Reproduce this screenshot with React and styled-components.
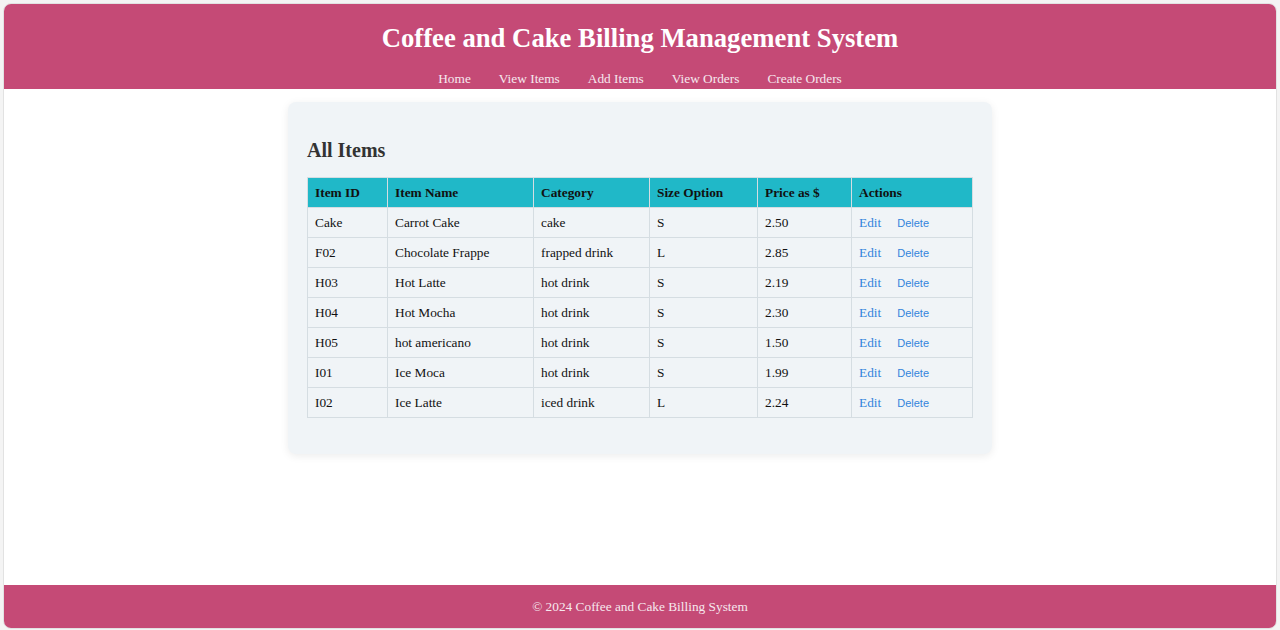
import React from "react";
import styled, { createGlobalStyle } from "styled-components";

const Global = createGlobalStyle`
  html, body { margin: 0; padding: 0; background: #f4f4f4; }
  body { font-family: "Liberation Serif", "Times New Roman", serif; }
`;

const Frame = styled.div`
  margin: 3px 3px 0 3px;
  height: 626px;
  background: #ffffff;
  border-radius: 8px;
  border: 1px solid #e2e2e2;
  box-sizing: border-box;
  overflow: hidden;
  display: flex;
  flex-direction: column;
`;

const Header = styled.header`
  background: #c54a76;
  color: #ffffff;
  height: 85px;
  display: flex;
  flex-direction: column;
  align-items: center;
  flex-shrink: 0;
`;

const Title = styled.h1`
  margin: 18px 0 0;
  font-size: 26.7px;
  line-height: 32px;
  font-weight: bold;
`;

const Nav = styled.nav`
  display: flex;
  gap: 28px;
  margin-top: 17px;
`;

const NavLink = styled.a`
  color: #f6e8ee;
  font-size: 13.33px;
  line-height: 16px;
  text-decoration: none;
`;

const Main = styled.main`
  flex: 1;
  display: flex;
  justify-content: center;
  align-items: flex-start;
  padding-top: 13px;
`;

const Card = styled.section`
  width: 704px;
  box-sizing: border-box;
  background: #f0f4f7;
  border-radius: 8px;
  box-shadow: 0 2px 8px rgba(0, 0, 0, 0.08);
  padding: 35px 19px 36px;
`;

const Heading = styled.h2`
  margin: 0 0 15px;
  padding-top: 1px;
  font-size: 20px;
  line-height: 24px;
  font-weight: bold;
  color: #333333;
`;

const Table = styled.table`
  width: 100%;
  border-collapse: collapse;
  font-size: 13.33px;
  color: #111;
  border: 1px solid #d5dde2;
`;

const Th = styled.th`
  background: #20b8c8;
  color: #111;
  text-align: left;
  font-weight: bold;
  height: 30px;
  padding: 0 7px;
  border: 1px solid #d5dde2;
  border-top: none;
  width: ${(p) => p.$w}px;
  box-sizing: border-box;
`;

const Td = styled.td`
  height: 30px;
  padding: 0 7px;
  border: 1px solid #d5dde2;
  box-sizing: border-box;
`;

const Actions = styled.div`
  display: flex;
  align-items: center;
  gap: 16px;
`;

const EditLink = styled.a`
  color: #3384dc;
  font-size: 13.33px;
  text-decoration: none;
`;

const DeleteButton = styled.button`
  background: none;
  border: none;
  padding: 0;
  color: #3384dc;
  font-family: "Liberation Sans", Arial, sans-serif;
  font-size: 11px;
  cursor: pointer;
`;

const Footer = styled.footer`
  background: #c54a76;
  color: #f6e8ee;
  height: 43px;
  display: flex;
  align-items: center;
  justify-content: center;
  font-size: 13.33px;
  flex-shrink: 0;
`;

const columns = [
  { label: "Item ID", w: 80 },
  { label: "Item Name", w: 146 },
  { label: "Category", w: 116 },
  { label: "Size Option", w: 108 },
  { label: "Price as $", w: 94 },
  { label: "Actions", w: 121 },
];

const items = [
  ["Cake", "Carrot Cake", "cake", "S", "2.50"],
  ["F02", "Chocolate Frappe", "frapped drink", "L", "2.85"],
  ["H03", "Hot Latte", "hot drink", "S", "2.19"],
  ["H04", "Hot Mocha", "hot drink", "S", "2.30"],
  ["H05", "hot americano", "hot drink", "S", "1.50"],
  ["I01", "Ice Moca", "hot drink", "S", "1.99"],
  ["I02", "Ice Latte", "iced drink", "L", "2.24"],
];

export default function App() {
  return (
    <>
      <Global />
      <Frame>
        <Header>
          <Title>Coffee and Cake Billing Management System</Title>
          <Nav>
            {["Home", "View Items", "Add Items", "View Orders", "Create Orders"].map((n) => (
              <NavLink key={n} href="#">{n}</NavLink>
            ))}
          </Nav>
        </Header>
        <Main>
          <Card>
            <Heading>All Items</Heading>
            <Table>
              <thead>
                <tr>
                  {columns.map((c) => (
                    <Th key={c.label} $w={c.w}>{c.label}</Th>
                  ))}
                </tr>
              </thead>
              <tbody>
                {items.map((row) => (
                  <tr key={row[0]}>
                    {row.map((v, i) => (
                      <Td key={i}>{v}</Td>
                    ))}
                    <Td>
                      <Actions>
                        <EditLink href="#">Edit</EditLink>
                        <DeleteButton>Delete</DeleteButton>
                      </Actions>
                    </Td>
                  </tr>
                ))}
              </tbody>
            </Table>
          </Card>
        </Main>
        <Footer>© 2024 Coffee and Cake Billing System</Footer>
      </Frame>
    </>
  );
}
